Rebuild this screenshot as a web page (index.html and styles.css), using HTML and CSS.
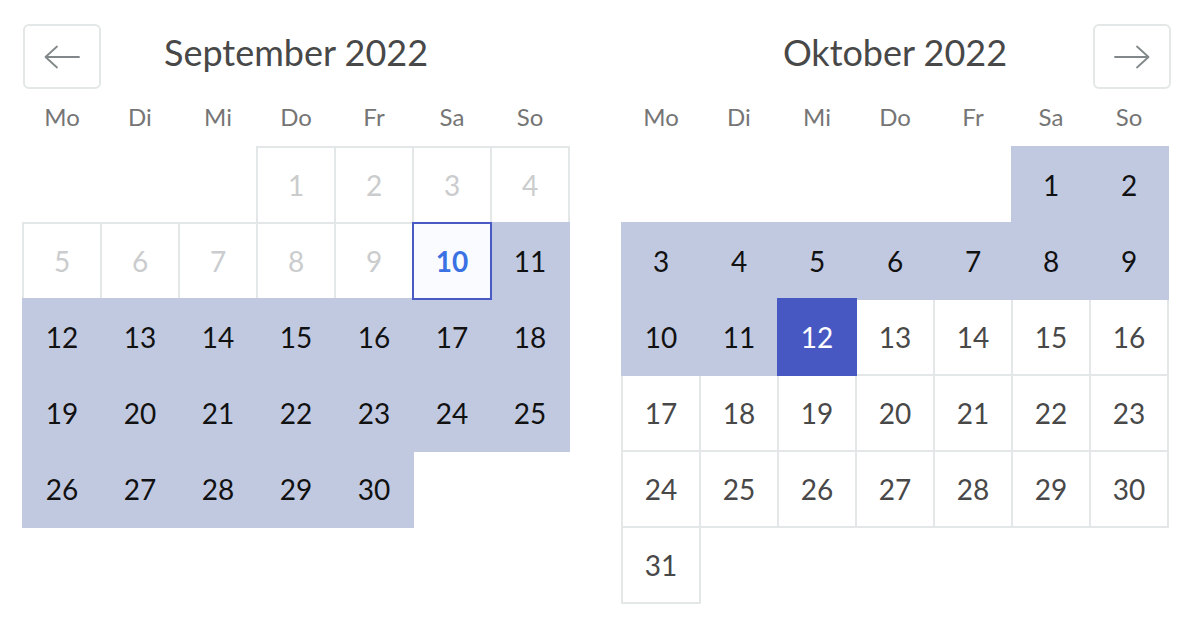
FILE: index.html
```html
<!DOCTYPE html>
<html lang="de">
<head>
<meta charset="utf-8">
<title>Kalender</title>
<link rel="stylesheet" href="styles.css">
</head>
<body>
<div class="picker">
  <section class="month">
    <div class="month-head">
      <button class="nav nav-prev" aria-label="Vorheriger Monat">
        <svg width="36" height="24" viewBox="0 0 36 24"><path d="M35 12H1.5M13 1.5L1.5 12L13 22.5" fill="none" stroke="#82888a" stroke-width="1.8" stroke-linecap="round" stroke-linejoin="round"/></svg>
      </button>
      <div class="title">September 2022</div>
    </div>
    <div class="weekdays"><span>Mo</span><span>Di</span><span>Mi</span><span>Do</span><span>Fr</span><span>Sa</span><span>So</span></div>
    <div class="days">
      <div class="day off first-thu">1</div>
      <div class="day off">2</div>
      <div class="day off">3</div>
      <div class="day off">4</div>
      <div class="day off">5</div>
      <div class="day off">6</div>
      <div class="day off">7</div>
      <div class="day off">8</div>
      <div class="day off">9</div>
      <div class="day today">10</div>
      <div class="day span">11</div>
      <div class="day span">12</div>
      <div class="day span">13</div>
      <div class="day span">14</div>
      <div class="day span">15</div>
      <div class="day span">16</div>
      <div class="day span">17</div>
      <div class="day span">18</div>
      <div class="day span">19</div>
      <div class="day span">20</div>
      <div class="day span">21</div>
      <div class="day span">22</div>
      <div class="day span">23</div>
      <div class="day span">24</div>
      <div class="day span">25</div>
      <div class="day span">26</div>
      <div class="day span">27</div>
      <div class="day span">28</div>
      <div class="day span">29</div>
      <div class="day span">30</div>
    </div>
  </section>
  <section class="month">
    <div class="month-head">
      <div class="title">Oktober 2022</div>
      <button class="nav nav-next" aria-label="Nächster Monat">
        <svg width="36" height="24" viewBox="0 0 36 24"><path d="M1 12H34.5M23 1.5L34.5 12L23 22.5" fill="none" stroke="#82888a" stroke-width="1.8" stroke-linecap="round" stroke-linejoin="round"/></svg>
      </button>
    </div>
    <div class="weekdays"><span>Mo</span><span>Di</span><span>Mi</span><span>Do</span><span>Fr</span><span>Sa</span><span>So</span></div>
    <div class="days">
      <div class="day span first-sat">1</div>
      <div class="day span">2</div>
      <div class="day span">3</div>
      <div class="day span">4</div>
      <div class="day span">5</div>
      <div class="day span">6</div>
      <div class="day span">7</div>
      <div class="day span">8</div>
      <div class="day span">9</div>
      <div class="day span">10</div>
      <div class="day span">11</div>
      <div class="day end">12</div>
      <div class="day">13</div>
      <div class="day">14</div>
      <div class="day">15</div>
      <div class="day">16</div>
      <div class="day">17</div>
      <div class="day">18</div>
      <div class="day">19</div>
      <div class="day">20</div>
      <div class="day">21</div>
      <div class="day">22</div>
      <div class="day">23</div>
      <div class="day">24</div>
      <div class="day">25</div>
      <div class="day">26</div>
      <div class="day">27</div>
      <div class="day">28</div>
      <div class="day">29</div>
      <div class="day">30</div>
      <div class="day">31</div>
    </div>
  </section>
</div>
</body>
</html>
```
FILE: styles.css
```css
html, body {
  margin: 0;
  padding: 0;
  background: #ffffff;
}

body {
  font-family: Lato, "Open Sans", "Liberation Sans", sans-serif;
  color: #484848;
}

.picker {
  display: flex;
  gap: 51px;
  padding: 24px 0 40px 22px;
}

.month {
  width: 548px;
}

.month-head {
  display: grid;
  grid-template-columns: 78px 1fr 78px;
  align-items: start;
  height: 65px;
}

.title {
  grid-column: 2;
  grid-row: 1;
  text-align: center;
  font-size: 36px;
  line-height: 43px;
  margin-top: 7px;
  color: #484848;
}

.nav {
  grid-row: 1;
  width: 78px;
  height: 65px;
  box-sizing: border-box;
  border: 2px solid #e4e7e7;
  border-radius: 6px;
  background: #ffffff;
  padding: 0;
  display: flex;
  align-items: center;
  justify-content: center;
  cursor: pointer;
}

.nav-prev {
  grid-column: 1;
  margin-left: 1px;
}

.nav-next {
  grid-column: 3;
  margin-left: 2px;
}

.weekdays {
  display: grid;
  grid-template-columns: repeat(7, 78px);
  margin-top: 13px;
  height: 30px;
  line-height: 30px;
  font-size: 24px;
  color: #757575;
}

.weekdays span {
  text-align: center;
  padding-left: 2px;
}

.days {
  display: grid;
  grid-template-columns: repeat(7, 78px);
  grid-auto-rows: 76px;
  margin-top: 14px;
  padding-bottom: 2px;
}

.day {
  width: 80px;
  height: 78px;
  box-sizing: border-box;
  border: 2px solid #e4e7e7;
  background: #ffffff;
  text-align: center;
  font-size: 28px;
  line-height: 74px;
  color: #484848;
}

.first-thu {
  grid-column-start: 4;
}

.first-sat {
  grid-column-start: 6;
}

.day.off {
  color: #cacccd;
}

.day.span {
  background: #c1c9e1;
  border-color: #c1c9e1;
  color: #111111;
  z-index: 1;
}

.day.end {
  background: #4858c3;
  border-color: #4858c3;
  color: #ffffff;
  z-index: 1;
}

.day.today {
  background: #f9fbff;
  border-color: #4a5ac4;
  color: #3a72e3;
  font-weight: 700;
  z-index: 2;
}
```
